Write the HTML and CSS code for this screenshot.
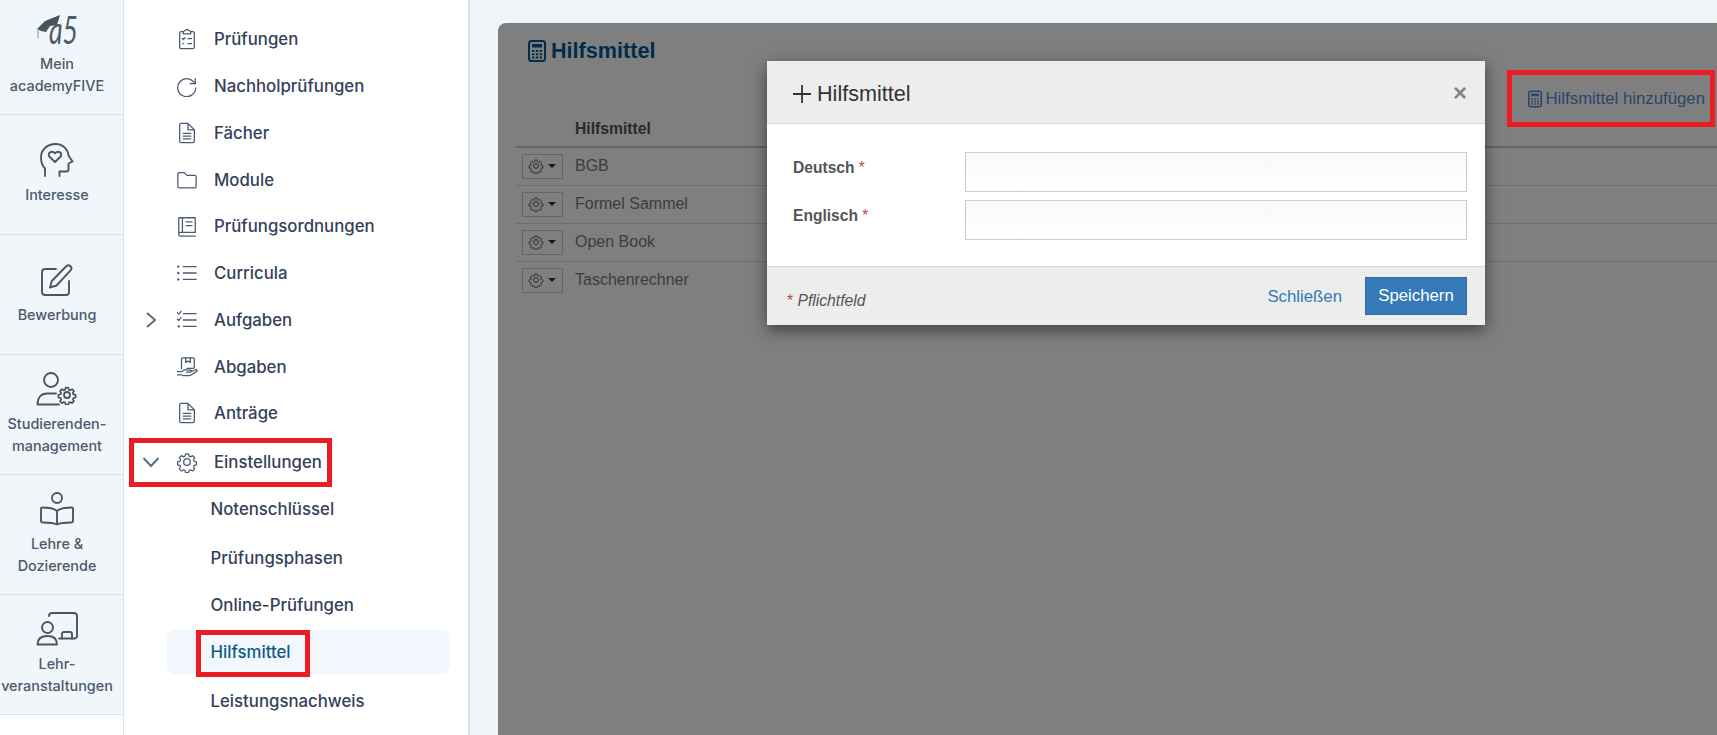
FILE: index.html
```html
<!DOCTYPE html>
<html lang="de">
<head>
<meta charset="utf-8">
<title>Hilfsmittel</title>
<link rel="stylesheet" href="styles.css">
</head>
<body>
<svg class="defs" width="0" height="0" aria-hidden="true">
  <symbol id="calc" viewBox="0 0 18 22">
    <rect x="1" y="1" width="16" height="20" rx="2.5" fill="none" stroke="currentColor" stroke-width="2"/>
    <rect x="4" y="4" width="10" height="3.5" fill="currentColor"/>
    <path d="M4 10h2.400v2H4zM7.800 10h2.400v2H7.800zM11.600 10H14v2h-2.400zM4 13.200h2.400v2H4zM7.800 13.200h2.400v2H7.800zM11.600 13.200H14v2h-2.400zM4 16.400h2.400v2H4zM7.800 16.400h2.400v2H7.800zM11.600 16.400H14v2h-2.400z" fill="currentColor"/>
  </symbol>
  <symbol id="gear" viewBox="0 0 24 24" fill="none" stroke="currentColor" stroke-linejoin="round">
    <path d="M10.300 2.600h3.400l.6 2.700 1.700.8 2.400-1.400 2.400 2.400-1.400 2.400.7 1.700 2.700.6v3.400l-2.700.6-.7 1.700 1.400 2.400-2.400 2.400-2.400-1.400-1.700.7-.6 2.700h-3.400l-.6-2.700-1.700-.7-2.400 1.400-2.400-2.400 1.400-2.400-.7-1.700-2.700-.6v-3.400l2.700-.6.7-1.700-1.400-2.400 2.400-2.400 2.400 1.400 1.700-.8z" transform="translate(.6 .6) scale(.95)"/>
    <circle cx="12" cy="12" r="3.600"/>
  </symbol>
</svg>

<aside class="rail">
  <a class="rail-item first">
    <svg class="rail-icon" viewBox="0 0 44 34" aria-hidden="true">
      <path d="M2 17 L10 9 L25 3 L22 13 L15 14 L11 20 L6 19 Z" fill="#46545f"/>
      <path d="M3 17 V26" fill="none" stroke="#8c98a2" stroke-width="1"/>
      <text class="logo-text" x="14" y="32" textLength="29" lengthAdjust="spacingAndGlyphs">a5</text>
    </svg>
    <span>Mein<br>academyFIVE</span>
  </a>
  <a class="rail-item">
    <svg class="rail-icon" viewBox="0 0 34 34" aria-hidden="true">
      <path d="M5 33 V25.500 C2 22.500 1 18.500 1 14.500 C1 6.500 7.500 1 15.500 1 C23.500 1 28 7 28.500 12.500 L32.500 18.500 L28.500 20.500 V26.500 Q28.500 28.500 26.500 28.500 H19.500 V33"/>
      <path d="M15 19 L9.500 13.800 C6.800 10.500 11.800 6.500 15 10.300 C18.200 6.500 23.200 10.500 20.500 13.800 Z"/>
    </svg>
    <span>Interesse</span>
  </a>
  <a class="rail-item">
    <svg class="rail-icon" viewBox="0 0 34 34" aria-hidden="true">
      <path d="M16 6 H5 Q2 6 2 9 V29 Q2 32 5 32 H26 Q29 32 29 29 V18"/>
      <path d="M10 24.500 L11.800 18 L26.500 3 C29 .8 33 4.500 30.800 7.200 L16.500 22.500 Z"/>
    </svg>
    <span>Bewerbung</span>
  </a>
  <a class="rail-item">
    <svg class="rail-icon wide" viewBox="0 0 42 34" aria-hidden="true">
      <circle cx="15" cy="8" r="7"/>
      <path d="M1.500 32.500 C1.500 26 5 21.500 11 21.500 H20 M1.500 32.500 H23"/>
      <use class="rail-gear" href="#gear" x="21" y="13" width="20" height="20"/>
    </svg>
    <span>Studierenden-<br>management</span>
  </a>
  <a class="rail-item">
    <svg class="rail-icon" viewBox="0 0 34 34" aria-hidden="true">
      <circle cx="17" cy="6" r="5"/>
      <path d="M17 19 C13 15.500 7 15.500 2 15.500 Q1 15.500 1 17 V29 Q1 30.500 3 30.500 C8 30.500 13 30.500 17 32.500 C21 30.500 26 30.500 31 30.500 Q33 30.500 33 29 V17 Q33 15.500 32 15.500 C27 15.500 21 15.500 17 19 V32.500"/>
    </svg>
    <span>Lehre &amp;<br>Dozierende</span>
  </a>
  <a class="rail-item">
    <svg class="rail-icon wide" viewBox="0 0 42 34" aria-hidden="true">
      <path d="M13 4 Q13 1 16 1 H38 Q41 1 41 4 V24 Q41 26.500 38 26.500 H23"/>
      <path d="M26 26.500 V22 Q26 20 28 20 H34 Q36 20 36 22 V26.500"/>
      <circle cx="11.500" cy="15.500" r="5.500"/>
      <path d="M1.500 32.500 C1.500 26 6 24 11.500 24 C17 24 21 26 21 32.500 Z"/>
    </svg>
    <span>Lehr-<br>veranstaltungen</span>
  </a>
</aside>

<nav class="nav">
  <a class="nav-item"><span class="caret"></span>
    <svg class="nav-icon" viewBox="0 0 24 24" aria-hidden="true"><path d="M8 4H5.500Q4 4 4 5.500V21Q4 22.500 5.500 22.500H18.500Q20 22.500 20 21V5.500Q20 4 18.500 4H16"/><path d="M8 6.500V3.800L12 1.500L16 3.800V6.500Z"/><path d="M7 11.500l1 1 2-2M13 11.500h4M7.500 17h1M13 17h4"/></svg>
    <span>Prüfungen</span></a>
  <a class="nav-item"><span class="caret"></span>
    <svg class="nav-icon" viewBox="0 0 24 24" aria-hidden="true"><path d="M20.500 9.500A9.800 9.800 0 1 0 21.500 14"/><path d="M21 4V9.500H15.500"/></svg>
    <span>Nachholprüfungen</span></a>
  <a class="nav-item"><span class="caret"></span>
    <svg class="nav-icon" viewBox="0 0 24 24" aria-hidden="true"><path d="M13 1.500H5.500Q4 1.500 4 3V21Q4 22.500 5.500 22.500H18.500Q20 22.500 20 21V8.500Z"/><path d="M13 1.500V8.500H20"/><path d="M8 12.500H16M8 15.500H16M8 18.500H16"/></svg>
    <span>Fächer</span></a>
  <a class="nav-item"><span class="caret"></span>
    <svg class="nav-icon" viewBox="0 0 24 24" aria-hidden="true"><path d="M2 5.500Q2 4 3.500 4H9L12 7H20.500Q22 7 22 8.500V19Q22 20.500 20.500 20.500H3.500Q2 20.500 2 19Z"/></svg>
    <span>Module</span></a>
  <a class="nav-item"><span class="caret"></span>
    <svg class="nav-icon" viewBox="0 0 24 24" aria-hidden="true"><path d="M3 19V3H21V19H5Q3 19 3 21.500Q3 23 5 23H21"/><path d="M7 3V19"/><path d="M11 7.500H17.500M11 11.500H17.500"/></svg>
    <span>Prüfungsordnungen</span></a>
  <a class="nav-item"><span class="caret"></span>
    <svg class="nav-icon" viewBox="0 0 24 24" aria-hidden="true"><path d="M8 5H22M8 12H22M8 19H22"/><path class="dots" d="M2.500 5h.01M2.500 12h.01M2.500 19h.01"/></svg>
    <span>Curricula</span></a>
  <a class="nav-item"><span class="caret"><svg viewBox="0 0 12 18" aria-hidden="true"><path d="M2 2L10 9L2 16"/></svg></span>
    <svg class="nav-icon" viewBox="0 0 24 24" aria-hidden="true"><path d="M8 5H22M8 12H22M8 19H22"/><path d="M1.500 4l1.500 1.500L5.500 2.500M1.500 11l1.500 1.500 2.500-3"/><path class="dots" d="M3 19h.01"/></svg>
    <span>Aufgaben</span></a>
  <a class="nav-item"><span class="caret"></span>
    <svg class="nav-icon" viewBox="0 0 24 24" aria-hidden="true"><path d="M6 14V3.500Q6 2 7.500 2H18.500Q20 2 20 3.500V12Q20 13.500 18.500 13.500H12"/><path d="M10.500 2V7L13 5.500L15.500 7V2"/><path d="M1.500 17H6.500C8.500 15 11 14.500 13 15.500H16Q17.500 16 16 17.500H11.500M16.500 17L21 15Q23 14.500 23 16.500L17 20.500Q15.500 21.500 13.500 21.500H8L6 20.500H1.500"/></svg>
    <span>Abgaben</span></a>
  <a class="nav-item"><span class="caret"></span>
    <svg class="nav-icon" viewBox="0 0 24 24" aria-hidden="true"><path d="M13 1.500H5.500Q4 1.500 4 3V21Q4 22.500 5.500 22.500H18.500Q20 22.500 20 21V8.500Z"/><path d="M13 1.500V8.500H20"/><path d="M8 12.500H16M8 15.500H16M8 18.500H16"/></svg>
    <span>Anträge</span></a>
  <a class="nav-item settings">
    <span class="caret open"><svg viewBox="0 0 18 12" aria-hidden="true"><path d="M1.500 2L9 10L16.500 2"/></svg></span>
    <svg class="nav-icon gear-icon" aria-hidden="true"><use href="#gear"/></svg>
    <span>Einstellungen</span>
    <i class="mark mark-settings"></i></a>
  <a class="sub first-sub">Notenschlüssel</a>
  <a class="sub wide-gap">Prüfungsphasen</a>
  <a class="sub">Online-Prüfungen</a>
  <a class="sub active">Hilfsmittel<i class="mark mark-active"></i></a>
  <a class="sub wide-gap">Leistungsnachweis</a>
</nav>

<main class="main">
  <section class="panel">
    <h1 class="title"><svg class="title-icon" aria-hidden="true"><use href="#calc"/></svg>Hilfsmittel</h1>
    <div class="toolbar">
      <a class="add-link"><svg class="add-icon" aria-hidden="true"><use href="#calc"/></svg>Hilfsmittel hinzufügen</a>
    </div>
    <table class="table">
      <thead><tr><th class="col-action"></th><th>Hilfsmittel</th></tr></thead>
      <tbody>
        <tr><td><span class="gear-btn"><svg aria-hidden="true"><use href="#gear"/></svg><b></b></span></td><td>BGB</td></tr>
        <tr><td><span class="gear-btn"><svg aria-hidden="true"><use href="#gear"/></svg><b></b></span></td><td>Formel Sammel</td></tr>
        <tr><td><span class="gear-btn"><svg aria-hidden="true"><use href="#gear"/></svg><b></b></span></td><td>Open Book</td></tr>
        <tr><td><span class="gear-btn"><svg aria-hidden="true"><use href="#gear"/></svg><b></b></span></td><td>Taschenrechner</td></tr>
      </tbody>
    </table>
    <div class="backdrop"></div>
    <i class="mark mark-add"></i>
    <div class="modal">
      <header class="modal-head">
        <h2><svg class="plus" viewBox="0 0 18 18" aria-hidden="true"><path d="M9 0V18M0 9H18"/></svg>Hilfsmittel</h2>
        <span class="close">×</span>
      </header>
      <div class="modal-body">
        <div class="field"><label>Deutsch <em>*</em></label><input type="text"></div>
        <div class="field"><label>Englisch <em>*</em></label><input type="text"></div>
      </div>
      <footer class="modal-foot">
        <span class="req"><em>*</em> Pflichtfeld</span>
        <a class="close-link">Schließen</a>
        <button class="save" type="button">Speichern</button>
      </footer>
    </div>
  </section>
</main>
</body>
</html>
```
FILE: styles.css
```css
* { box-sizing: border-box; }
html, body { height: 100%; }
body {
  margin: 0;
  display: flex;
  height: 735px;
  overflow: hidden;
  background: #eff4f8;
  font-family: "Liberation Sans", Arial, sans-serif;
  font-size: 16px;
}
.defs { position: absolute; }

/* icon rail */
.rail {
  width: 124px;
  flex: none;
  background: #fff;
  border-right: 1px solid #d9e4ed;
  font-family: Inter, sans-serif;
  font-size: 14.4px;
  font-weight: 500;
  line-height: 22px;
  color: #4b5a6c;
  text-align: center;
}
.rail-item {
  display: flex;
  flex-direction: column;
  align-items: center;
  justify-content: center;
  height: 120px;
  padding-right: 9px;
  background: #f1f6fa;
  border-bottom: 1px solid #d9e4ed;
}
.rail-item.first { height: 115px; padding-bottom: 6px; }
.rail-item span { white-space: nowrap; }
.rail-icon {
  width: 34px;
  height: 34px;
  margin-bottom: 7px;
  overflow: visible;
  fill: none;
  stroke: #4b5563;
  stroke-width: 1.9;
  stroke-linejoin: round;
  stroke-linecap: round;
  color: #4b5563;
}
.rail-icon.wide { width: 42px; }
.rail-gear { stroke-width: 2.2; }
.first .rail-icon { width: 44px; stroke: none; }
.logo-text {
  font-family: Lato, sans-serif;
  font-weight: 400;
  font-style: italic;
  font-size: 38px;
  fill: #4f5b66;
  stroke: none;
}

/* secondary navigation */
.nav {
  width: 346px;
  flex: none;
  padding-top: 16px;
  background: #fff;
  border-right: 2px solid #dbe3ea;
  font-family: Inter, sans-serif;
  font-size: 16.8px;
  font-weight: 500;
  color: #33415a;
}
.nav-item {
  position: relative;
  display: flex;
  align-items: center;
  height: 46.75px;
}
.caret {
  display: flex;
  align-items: center;
  justify-content: center;
  width: 52px;
  padding-left: 2px;
}
.caret svg { width: 12px; height: 18px; fill: none; stroke: #5b6b82; stroke-width: 2; }
.caret.open svg { width: 18px; height: 12px; }
.nav-icon {
  width: 22px;
  height: 22px;
  margin-right: 16px;
  fill: none;
  stroke: #4d5b70;
  stroke-width: 1.4;
  stroke-linejoin: round;
  stroke-linecap: round;
  color: #4d5b70;
}
.nav-icon .dots { stroke-width: 2.6; }
.settings { margin-top: 2px; }
.sub {
  position: relative;
  display: flex;
  align-items: center;
  height: 44px;
  margin: 3px 18px 0 43px;
  padding: 1px 0 0 43.5px;
  border-radius: 8px;
}
.first-sub { margin-top: 1px; }
.wide-gap { margin-top: 5px; }
.active { background: #f1f7fc; color: #0f5a87; }

/* annotation frames */
.mark {
  position: absolute;
  z-index: 3;
  display: block;
  border: 5px solid #ed1c24;
}
.mark-settings { left: 5px; top: -1px; width: 203px; height: 49px; }
.mark-active { left: 29px; top: 0; width: 114px; height: 47px; }
.mark-add { left: 1009px; top: 47px; width: 208px; height: 57px; }

/* content */
.main {
  flex: 1;
  min-width: 0;
  padding: 23px 0 0 28px;
}
.panel {
  position: relative;
  height: 100%;
  padding: 13px 0 0 18px;
  background: #fff;
  border-radius: 8px 0 0 0;
  overflow: hidden;
}
.title {
  display: flex;
  align-items: center;
  height: 30px;
  margin: 0 0 0 12px;
  font-size: 21.6px;
  font-weight: 700;
  color: #005a94;
}
.title-icon { width: 18px; height: 22px; margin-right: 5px; }
.toolbar {
  display: flex;
  justify-content: flex-end;
  align-items: center;
  height: 28px;
  margin-top: 19px;
  padding-right: 12px;
  font-size: 16.8px;
}
.add-link { display: flex; align-items: center; color: #4f8fd6; }
.add-icon { width: 14px; height: 18px; margin-right: 4px; }
.table {
  width: 100%;
  border-collapse: collapse;
  color: #7a7a7a;
}
.table th {
  height: 34px;
  padding: 0 0 2px;
  text-align: left;
  font-size: 15.7px;
  color: #555;
  border-bottom: 2px solid #c8c8c8;
}
.table td {
  height: 38px;
  padding: 0;
  border-top: 1px solid #ddd;
}
.col-action { width: 59px; }
.gear-btn {
  display: flex;
  align-items: center;
  width: 41px;
  height: 25px;
  margin-left: 6px;
  padding-left: 5px;
  border: 1px solid #ccc;
  color: #555;
}
.gear-btn svg { width: 16px; height: 16px; stroke-width: 1.5; }
.gear-btn b {
  margin-left: 4px;
  border-left: 4px solid transparent;
  border-right: 4px solid transparent;
  border-top: 4px solid #333;
}
.backdrop {
  position: absolute;
  inset: 0;
  z-index: 1;
  background: rgba(0, 0, 0, .5);
}

/* modal */
.modal {
  position: absolute;
  z-index: 2;
  left: 269px;
  top: 38px;
  width: 718px;
  height: 264px;
  display: flex;
  flex-direction: column;
  background: #fff;
  box-shadow: 0 5px 15px rgba(0, 0, 0, .5);
}
.modal-head {
  display: flex;
  align-items: center;
  justify-content: space-between;
  height: 63px;
  padding: 0 18px 0 26px;
  background: #ededed;
  border-bottom: 1px solid #d9d9d9;
}
.modal-head h2 {
  display: flex;
  align-items: center;
  margin: 0;
  padding-top: 3px;
  font-size: 21.6px;
  font-weight: 400;
  color: #333;
}
.plus { width: 18px; height: 18px; margin-right: 6px; fill: none; stroke: #333; stroke-width: 1.8; }
.close { padding-top: 2px; font-size: 24px; font-weight: 700; color: #858585; line-height: 1; }
.modal-body {
  flex: 1;
  padding: 28px 18px 0 26px;
}
.field {
  display: flex;
  margin-bottom: 8px;
}
.field label {
  width: 172px;
  padding-top: 7px;
  font-size: 15.6px;
  font-weight: 700;
  color: #555;
}
.field em, .req em { color: #b94a48; font-weight: 400; font-style: normal; }
.field input {
  flex: 1;
  height: 40px;
  border: 1px solid #ccc;
  background: linear-gradient(#f8f8f8, #fff);
}
.modal-foot {
  display: flex;
  align-items: center;
  height: 59px;
  padding: 0 18px 0 20px;
  background: #ededed;
  border-top: 1px solid #d9d9d9;
  font-size: 16.8px;
}
.req { flex: 1; font-size: 15.7px; font-style: italic; color: #555; padding-top: 9px; }
.close-link { margin-right: 23px; padding-top: 1px; color: #337ab7; }
.save {
  width: 102px;
  height: 38px;
  margin: 0;
  padding: 0;
  border: 1px solid #2e6da4;
  background: #337ab7;
  color: #fff;
  font: inherit;
}
```
